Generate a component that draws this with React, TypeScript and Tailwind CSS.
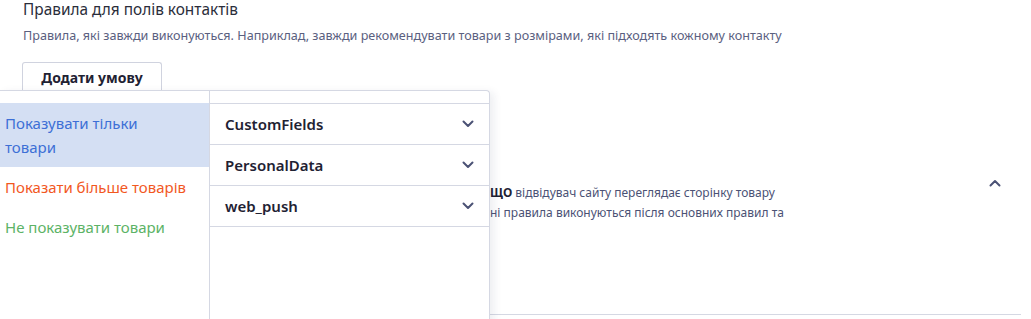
import React from 'react';

const ChevronDown = ({ className = '' }: { className?: string }) => (
  <svg width="12" height="8" viewBox="0 0 12 8" fill="none" className={className}>
    <path d="M1.5 1.5 6 6l4.5-4.5" stroke="currentColor" strokeWidth="2" strokeLinecap="round" strokeLinejoin="round" />
  </svg>
);

const ChevronUp = ({ className = '' }: { className?: string }) => (
  <svg width="12" height="8" viewBox="0 0 12 8" fill="none" className={className}>
    <path d="M1.5 6.5 6 2l4.5 4.5" stroke="currentColor" strokeWidth="2" strokeLinecap="round" strokeLinejoin="round" />
  </svg>
);

const actions = [
  { label: 'Показувати тільки товари', cls: 'text-[#3d6fd6] bg-[#d4dff3] pr-[30px]' },
  { label: 'Показати більше товарів', cls: 'text-[#f2581f]' },
  { label: 'Не показувати товари', cls: 'text-[#5cb366]' },
];

const groups = ['CustomFields', 'PersonalData', 'web_push'];

export default function App() {
  return (
    <div
      className="relative w-[1031px] h-[319px] overflow-hidden bg-white text-[#2a2d3a]"
      style={{ fontFamily: '"Noto Sans", "Liberation Sans", sans-serif' }}
    >
      {/* header */}
      <div className="pl-[23px]">
        <h2 className="text-[15.4px] leading-[19px] text-[#2a2d3a]">Правила для полів контактів</h2>
        <p className="mt-[8px] text-[12.6px] leading-[18px] text-[#5a6080]">
          Правила, які завжди виконуються. Наприклад, завжди рекомендувати товари з розмірами, які підходять кожному контакту
        </p>
        <button className="mt-[17px] ml-[-1px] h-[29px] w-[140px] border border-b-0 border-[#d0d3df] rounded-t-[3px] text-[14px] font-bold text-[#1f2233]">
          Додати умову
        </button>
      </div>

      {/* rule card behind dropdown */}
      <div className="flex items-start pt-[92px] pr-[30px]">
        <div className="ml-[490px] flex-1 text-[12px] leading-[20px] text-[#4b5275]">
          <p>
            <span className="font-bold text-[#1f2233]">ЩО</span> відвідувач сайту переглядає сторінку товару
          </p>
          <p>ні правила виконуються після основних правил та</p>
        </div>
        <ChevronUp className="text-[#4b5275] mt-[-4px]" />
      </div>
      <div className="ml-[490px] mr-[10px] mt-[91px] border-t border-[#d5d8e3]" />

      {/* dropdown */}
      <div className="absolute left-0 top-[90px] flex h-[260px] w-[490px] border-t border-r border-[#d5d8e3] rounded-tr-[4px] bg-white shadow-[4px_2px_8px_rgba(30,40,80,0.08)]">
        <div className="w-[209px] pt-[12px]">
          {actions.map((a) => (
            <div key={a.label} className={`pl-[5px] py-[8px] text-[15px] leading-[24px] ${a.cls}`}>
              {a.label}
            </div>
          ))}
        </div>
        <div className="flex-1 border-l border-[#d5d8e3] pt-[12px]">
          <div className="border-t border-[#d5d8e3]">
            {groups.map((g) => (
              <div key={g} className="flex h-[41px] items-center justify-between border-b border-[#d5d8e3] px-[15px]">
                <span className="text-[15px] font-semibold text-[#1f2233]">{g}</span>
                <ChevronDown className="text-[#4b5275]" />
              </div>
            ))}
          </div>
        </div>
      </div>
    </div>
  );
}
